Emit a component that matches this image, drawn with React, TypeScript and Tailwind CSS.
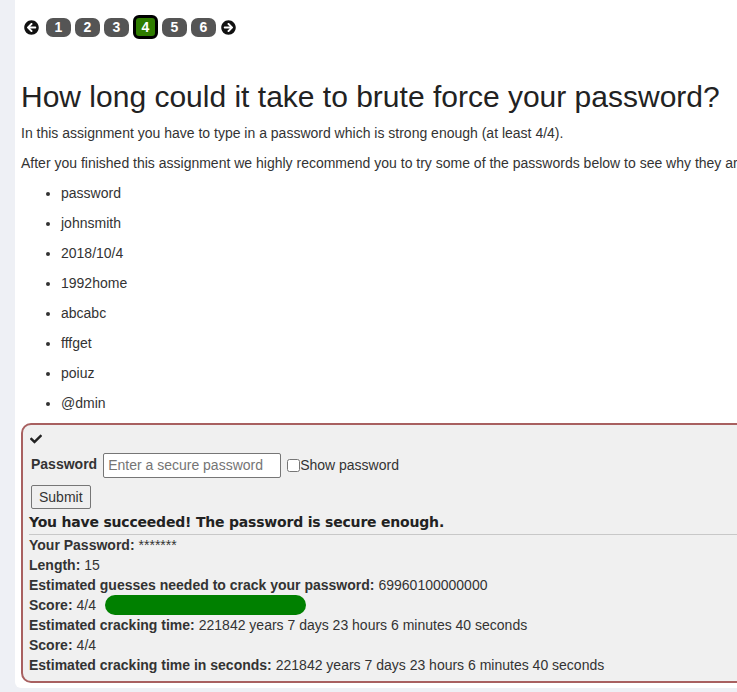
import React from "react";
import { FaArrowCircleLeft, FaArrowCircleRight, FaCheck } from "react-icons/fa";

const pages = [1, 2, 3, 4, 5, 6];
const tries = ["password", "johnsmith", "2018/10/4", "1992home", "abcabc", "fffget", "poiuz", "@dmin"];

function Row({ label, children }: { label: string; children?: React.ReactNode }) {
  return (
    <div className="flex items-center h-[20px] leading-[20px]">
      <span className="font-bold">{label}:</span>
      <span className="ml-1">{children}</span>
    </div>
  );
}

export default function App() {
  return (
    <div className="min-h-screen bg-[#eef0f5] pl-[15px] pb-[5px] overflow-hidden text-[14px] text-[#333] font-['Liberation_Sans',Arial,sans-serif]">
      <div className="w-[900px] bg-white rounded-bl-[6px] pl-[6px] pt-[14px] pb-[5px]">
        {/* page navigation */}
        <div className="flex items-center h-[26px] pl-[3px]">
          <FaArrowCircleLeft className="text-[#111] mr-[7px]" size={15} />
          {pages.map((p) =>
            p === 4 ? (
              <span
                key={p}
                className="flex items-center justify-center w-[25px] h-[24px] mr-[4px] rounded-[6px] border-[3px] border-black bg-[#2f7d00] text-white font-bold text-[14px]"
              >
                {p}
              </span>
            ) : (
              <span
                key={p}
                className="flex items-center justify-center w-[25px] h-[19px] mr-[4px] rounded-[7px] bg-[#555] text-white font-bold text-[14px]"
              >
                {p}
              </span>
            )
          )}
          <FaArrowCircleRight className="text-[#111] ml-[1px]" size={15} />
        </div>

        <h3 className="mt-[40px] mb-[10px] text-[30px] leading-[33px] text-[#222]">
          How long could it take to brute force your password?
        </h3>
        <p className="leading-[20px] mb-[10px]">
          In this assignment you have to type in a password which is strong enough (at least 4/4).
        </p>
        <p className="leading-[20px] mb-[10px] whitespace-nowrap">
          After you finished this assignment we highly recommend you to try some of the passwords below to see why they are not good choices:
        </p>
        <ul className="list-disc pl-[40px]">
          {tries.map((t) => (
            <li key={t} className="leading-[20px] mb-[10px]">
              {t}
            </li>
          ))}
        </ul>

        {/* assignment box */}
        <div className="mt-[1px] border-2 border-[#a86060] rounded-[10px] bg-[#f0f0f0] pl-[6px] pt-[8px] pb-[6px]">
          <FaCheck className="ml-[1px] text-[#222]" size={12} />
          <div className="flex items-center mt-[7px] h-[26px]">
            <label className="ml-[2px] font-bold mr-[6px] -mt-[2px]">Password</label>
            <input
              type="password"
              placeholder="Enter a secure password"
              className="w-[178px] h-[25px] border border-[#767676] bg-white px-[4px] text-[14px] placeholder:text-[#757575] rounded-[2px]"
            />
            <input type="checkbox" className="ml-[6px] w-[13px] h-[13px]" />
            <span>Show password</span>
          </div>
          <button className="ml-[2px] mt-[7px] h-[24px] px-[7px] border border-[#767676] rounded-[2px] bg-[#efefef] text-[14px]">
            Submit
          </button>
          <div className="mt-[4px] font-bold text-[14px] leading-[18px] text-[#222] font-['DejaVu_Sans',Verdana,sans-serif] tracking-[-0.2px]">
            You have succeeded! The password is secure enough.
          </div>
          <div className="mt-[3px] border-t border-[#c8c8c8]" />
          <Row label="Your Password">*******</Row>
          <Row label="Length">15</Row>
          <Row label="Estimated guesses needed to crack your password">69960100000000</Row>
          <div className="flex items-center h-[20px]">
            <span className="font-bold">Score:</span>
            <span className="ml-1">4/4</span>
            <span className="ml-[9px] w-[201px] h-[20px] rounded-full bg-[#008000]" />
          </div>
          <Row label="Estimated cracking time">221842 years 7 days 23 hours 6 minutes 40 seconds</Row>
          <Row label="Score">4/4</Row>
          <Row label="Estimated cracking time in seconds">221842 years 7 days 23 hours 6 minutes 40 seconds</Row>
        </div>
      </div>
    </div>
  );
}
